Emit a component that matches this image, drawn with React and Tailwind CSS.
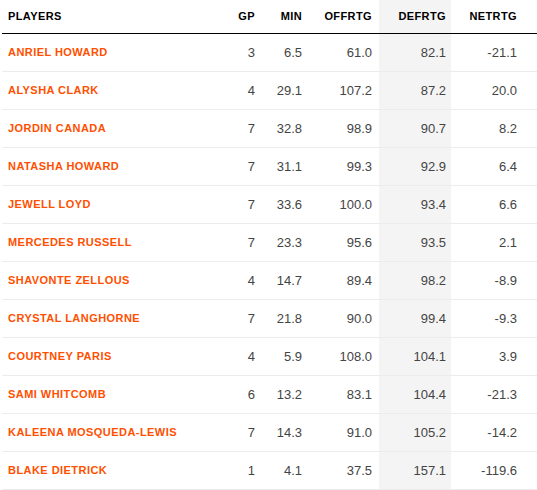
const rows = [
  ["ANRIEL HOWARD", "3", "6.5", "61.0", "82.1", "-21.1"],
  ["ALYSHA CLARK", "4", "29.1", "107.2", "87.2", "20.0"],
  ["JORDIN CANADA", "7", "32.8", "98.9", "90.7", "8.2"],
  ["NATASHA HOWARD", "7", "31.1", "99.3", "92.9", "6.4"],
  ["JEWELL LOYD", "7", "33.6", "100.0", "93.4", "6.6"],
  ["MERCEDES RUSSELL", "7", "23.3", "95.6", "93.5", "2.1"],
  ["SHAVONTE ZELLOUS", "4", "14.7", "89.4", "98.2", "-8.9"],
  ["CRYSTAL LANGHORNE", "7", "21.8", "90.0", "99.4", "-9.3"],
  ["COURTNEY PARIS", "4", "5.9", "108.0", "104.1", "3.9"],
  ["SAMI WHITCOMB", "6", "13.2", "83.1", "104.4", "-21.3"],
  ["KALEENA MOSQUEDA-LEWIS", "7", "14.3", "91.0", "105.2", "-14.2"],
  ["BLAKE DIETRICK", "1", "4.1", "37.5", "157.1", "-119.6"],
];

const grid = "grid grid-cols-[218px_40px_47px_72px_72px_1fr]";

export default function App() {
  return (
    <div className="bg-white w-[537px] h-[490px] overflow-hidden" style={{ fontFamily: '"Liberation Sans", Arial, sans-serif' }}>
      <div className="ml-[2px]">
        <div className={`${grid} h-[34px] border-b border-black items-stretch text-[11px] font-bold text-black tracking-[0.4px]`}>
          <div className="flex items-center pl-[6px]">PLAYERS</div>
          <div className="flex items-center justify-end pr-[5px]">GP</div>
          <div className="flex items-center justify-end pr-[5px]">MIN</div>
          <div className="flex items-center justify-end pr-[7px]">OFFRTG</div>
          <div className="flex items-center justify-end pr-[5px] bg-[#f4f4f4]">DEFRTG</div>
          <div className="flex items-center justify-end pr-[20px]">NETRTG</div>
        </div>
        {rows.map((r) => (
          <div key={r[0]} className={`${grid} h-[38px] border-b border-[#ececec] items-stretch`}>
            <div className="flex items-center pl-[6px] text-[11px] font-bold text-[#ff5000] tracking-[0.45px]">{r[0]}</div>
            <div className="flex items-center justify-end pr-[5px] text-[13px] text-[#444]">{r[1]}</div>
            <div className="flex items-center justify-end pr-[5px] text-[13px] text-[#444]">{r[2]}</div>
            <div className="flex items-center justify-end pr-[7px] text-[13px] text-[#444]">{r[3]}</div>
            <div className="flex items-center justify-end pr-[5px] text-[13px] text-[#444] bg-[#f4f4f4]">{r[4]}</div>
            <div className="flex items-center justify-end pr-[20px] text-[13px] text-[#444]">{r[5]}</div>
          </div>
        ))}
      </div>
    </div>
  );
}
